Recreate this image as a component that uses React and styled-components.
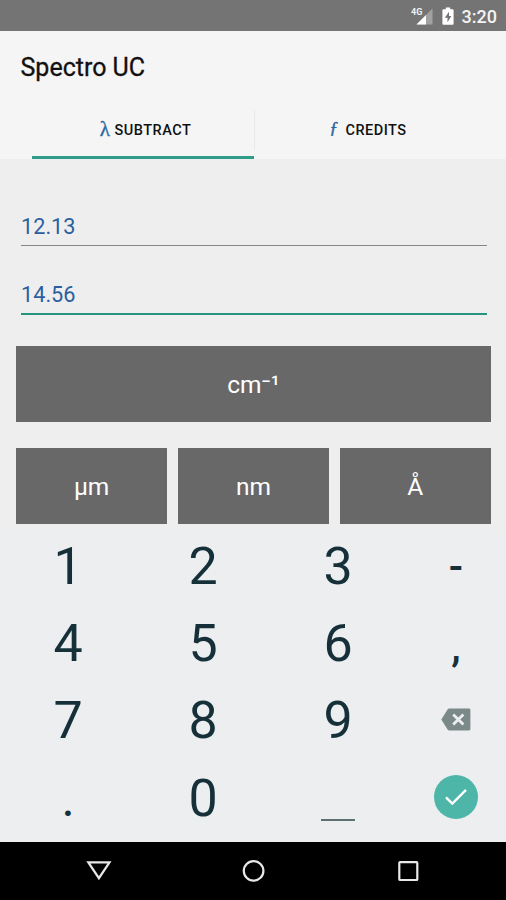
import styled, { createGlobalStyle } from "styled-components";

const GlobalStyle = createGlobalStyle`
  * {
    box-sizing: border-box;
  }
  body {
    margin: 0;
    font-family: Roboto, "Liberation Sans", sans-serif;
    background: #eeeeee;
  }
  button {
    border: 0;
    padding: 0;
    background: none;
    font-family: inherit;
  }
`;

const units = ["µm", "nm", "Å"];

export default function App() {
  return (
    <Screen>
      <GlobalStyle />
      <StatusBar>
        <SignalIcon />
        <BatteryIcon />
        <Clock>3:20</Clock>
      </StatusBar>
      <Header>
        <Title>Spectro UC</Title>
        <Tabs>
          <Tab $active>
            <LambdaGlyph>λ</LambdaGlyph>
            SUBTRACT
          </Tab>
          <Divider />
          <Tab>
            <FunctionGlyph>ƒ</FunctionGlyph>
            CREDITS
          </Tab>
        </Tabs>
      </Header>
      <Main>
        <Field defaultValue="12.13" />
        <Field defaultValue="14.56" $focused />
        <ResultButton>cm⁻¹</ResultButton>
        <UnitRow>
          {units.map((unit) => (
            <UnitButton key={unit}>{unit}</UnitButton>
          ))}
        </UnitRow>
      </Main>
      <Keypad>
        <Key>1</Key>
        <Key>2</Key>
        <Key>3</Key>
        <MinusKey>-</MinusKey>
        <Key>4</Key>
        <Key>5</Key>
        <Key>6</Key>
        <SymbolKey>,</SymbolKey>
        <Key>7</Key>
        <Key>8</Key>
        <Key>9</Key>
        <IconKey>
          <BackspaceIcon />
        </IconKey>
        <SymbolKey>.</SymbolKey>
        <Key>0</Key>
        <SpaceKey>
          <SpaceLine />
        </SpaceKey>
        <IconKey>
          <DoneCircle>
            <CheckIcon />
          </DoneCircle>
        </IconKey>
      </Keypad>
      <NavBar>
        <svg width="30" height="26" viewBox="0 0 30 26">
          <path d="M4.3 4.4H25.5L14.9 20.2Z" />
        </svg>
        <svg width="30" height="26" viewBox="0 0 30 26">
          <circle cx="14.6" cy="12.9" r="9.8" />
        </svg>
        <svg width="30" height="26" viewBox="0 0 30 26">
          <rect x="6.3" y="4.2" width="18" height="17.8" rx="0.8" />
        </svg>
      </NavBar>
    </Screen>
  );
}

function SignalIcon() {
  return (
    <svg width="23" height="19" viewBox="0 0 23 19">
      <path d="M21.5 1.5V17.5H5.5Z" fill="#a2a2a2" />
      <path d="M15 8V17.5H5.5Z" fill="#fff" />
      <text x="0" y="7.5" fontSize="9" fontWeight="700" fill="#f2f2f2">
        4G
      </text>
    </svg>
  );
}

function BatteryIcon() {
  return (
    <svg width="12" height="19" viewBox="0 0 12 19">
      <path
        d="M3.8 0.5h4.400v1.8h2.400q1 0 1 1V16.8q0 1-1 1H1.400q-1 0-1-1V3.3q0-1 1-1H3.8Z"
        fill="#fff"
      />
      <path d="M7 4.7L2.8 10.7H5.5V15.2L9.3 9H7Z" fill="#747474" />
    </svg>
  );
}

function BackspaceIcon() {
  return (
    <svg width="30" height="23" viewBox="0 0 30 23">
      <path
        d="M8.2 0.5H28q1.4 0 1.4 1.4V21q0 1.4-1.4 1.4H8.2q-1 0-1.6-0.9L0.3 11.5L6.6 1.4Q7.2 0.5 8.2 0.5Z"
        fill="#7b8989"
      />
      <path
        d="M12.2 6.4L22.4 16.6M22.4 6.4L12.2 16.6"
        stroke="#eceef0"
        strokeWidth="2.8"
      />
    </svg>
  );
}

function CheckIcon() {
  return (
    <svg width="24" height="20" viewBox="0 0 24 20">
      <path
        d="M2 10.4L8.3 16.5L22 2.8"
        fill="none"
        stroke="#fff"
        strokeWidth="2.4"
      />
    </svg>
  );
}

const Screen = styled.div`
  width: 506px;
  height: 900px;
  display: flex;
  flex-direction: column;
  overflow: hidden;
`;

const StatusBar = styled.div`
  height: 31px;
  flex: none;
  display: flex;
  justify-content: flex-end;
  align-items: center;
  padding: 1px 9px 0 0;
  background: #747474;
  svg + svg {
    margin-left: 8px;
  }
`;

const Clock = styled.span`
  margin-left: 8px;
  color: #f4f4f4;
  font-size: 18px;
  font-weight: 500;
`;

const Header = styled.header`
  height: 128px;
  flex: none;
  background: #f5f5f5;
`;

const Title = styled.h1`
  height: 72px;
  margin: 0;
  padding-left: 20.5px;
  color: #111;
  font-size: 25px;
  font-weight: 400;
  -webkit-text-stroke: 0.3px #111;
  line-height: 73px;
`;

const Tabs = styled.nav`
  height: 56px;
  display: flex;
  padding-left: 32px;
`;

const Divider = styled.span`
  width: 1px;
  height: 40px;
  margin-top: 7px;
  background: #e9e9e9;
`;

const Tab = styled.button`
  width: ${({ $active }) => ($active ? 222 : 226)}px;
  display: flex;
  align-items: center;
  justify-content: center;
  padding-top: ${({ $active }) => ($active ? 2 : 0)}px;
  padding-left: 4px;
  padding-bottom: ${({ $active }) => ($active ? 0 : 1)}px;
  border-bottom: ${({ $active }) => ($active ? "3px solid #2f9d89" : "0")};
  color: #111;
  font-size: 14.5px;
  font-weight: 500;
  letter-spacing: 0.5px;
`;

const LambdaGlyph = styled.span`
  margin: -3px 4px 0 1px;
  color: #2a66a0;
  font-family: "Liberation Serif", serif;
  font-size: 21px;
  line-height: 20px;
  -webkit-text-stroke: 0.3px #2a66a0;
`;

const FunctionGlyph = styled(LambdaGlyph)`
  margin: -5px 7px 0 -4px;
  font-size: 17px;
  font-style: italic;
  -webkit-text-stroke: 0.5px #2a66a0;
`;

const Main = styled.main`
  height: 372px;
  flex: none;
  padding: 46px 15px 0 16px;
  background: #eeeeee;
`;

const Field = styled.input`
  display: block;
  width: 466px;
  height: ${({ $focused }) => ($focused ? 42 : 41)}px;
  margin: 0 0 27px 5px;
  padding: 2px 0 0;
  border: 0;
  border-bottom: ${({ $focused }) =>
    $focused ? "2px solid #26957f" : "1px solid #868686"};
  border-radius: 0;
  outline: 0;
  background: transparent;
  color: #2c5f9e;
  font-family: inherit;
  font-size: 21.7px;
`;

const ResultButton = styled.button`
  display: block;
  width: 100%;
  height: 76px;
  margin-top: 31px;
  background: #686868;
  color: #fff;
  font-size: 24.5px;
`;

const UnitRow = styled.div`
  display: flex;
  gap: 10.5px;
  margin-top: 26px;
`;

const UnitButton = styled(ResultButton)`
  flex: 1;
  width: auto;
  margin-top: 0;
`;

const Keypad = styled.div`
  height: 311px;
  flex: none;
  display: grid;
  grid-template-columns: 135px 135px 135px 101px;
  grid-template-rows: repeat(4, 77.4px);
  background: #eceef0;
`;

const Key = styled.button`
  padding: 0 0 6px 1px;
  color: #16303a;
  font-size: 52px;
  line-height: 60px;
`;

const SymbolKey = styled(Key)`
  padding-bottom: 0;
  font-size: 42px;
  font-weight: 500;
`;

const MinusKey = styled(SymbolKey)`
  padding-bottom: 5px;
`;

const IconKey = styled.button`
  display: flex;
  align-items: center;
  justify-content: center;
  padding-bottom: 9px;
`;

const SpaceKey = styled(IconKey)`
  align-items: flex-end;
  padding: 0 0 20px 1px;
`;

const SpaceLine = styled.span`
  width: 34px;
  height: 2px;
  background: #5d7073;
`;

const DoneCircle = styled.span`
  width: 44px;
  height: 44px;
  display: flex;
  align-items: center;
  justify-content: center;
  border-radius: 50%;
  background: #4db6a9;
`;

const NavBar = styled.footer`
  flex: 1;
  display: flex;
  justify-content: space-between;
  align-items: center;
  padding: 0 83px 0 84px;
  background: #000;
  svg {
    fill: none;
    stroke: #e8e8e8;
    stroke-width: 2.2;
  }
`;
